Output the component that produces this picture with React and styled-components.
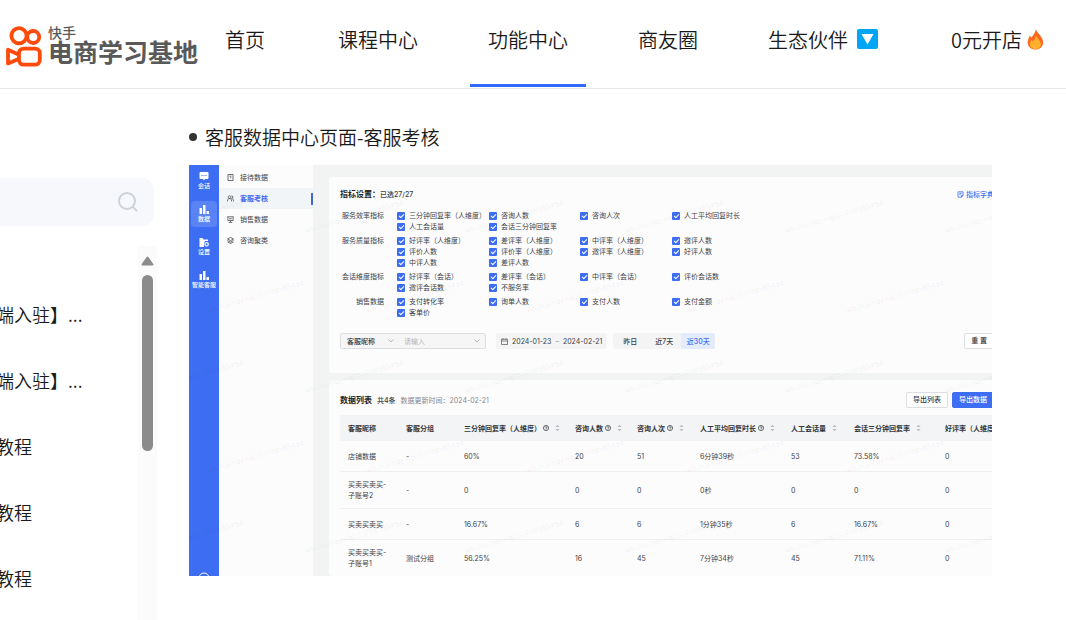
import React, { useState } from "react";
import styled, { createGlobalStyle, css } from "styled-components";

const navItems = [
  { label: "首页" },
  { label: "课程中心" },
  { label: "功能中心", active: true },
  { label: "商友圈" },
  { label: "生态伙伴", icon: "down" },
  { label: "0元开店", icon: "fire" },
];

const lessons = ["端入驻】...", "端入驻】...", "教程", "教程", "教程"];

const railItems = [
  { label: "会话", icon: "chat" },
  { label: "数据", icon: "bars", active: true },
  { label: "设置", icon: "folder" },
  { label: "智能客服", icon: "bars" },
];

const menuItems = [
  { label: "接待数据", icon: "doc" },
  { label: "客服考核", icon: "people", active: true },
  { label: "销售数据", icon: "board" },
  { label: "咨询聚类", icon: "layers" },
];

// items fill the four columns row by row
const metricGroups = [
  {
    title: "服务效率指标",
    items: ["三分钟回复率（人维度）", "咨询人数", "咨询人次", "人工平均回复时长", "人工会话量", "会话三分钟回复率"],
  },
  {
    title: "服务质量指标",
    items: [
      "好评率（人维度）", "差评率（人维度）", "中评率（人维度）", "邀评人数",
      "评价人数", "评价率（人维度）", "邀评率（人维度）", "好评人数",
      "中评人数", "差评人数",
    ],
  },
  {
    title: "会话维度指标",
    items: ["好评率（会话）", "差评率（会话）", "中评率（会话）", "评价会话数", "邀评会话数", "不服务率"],
  },
  {
    title: "销售数据",
    items: ["支付转化率", "询单人数", "支付人数", "支付金额", "客单价"],
  },
];

const ranges = ["昨日", "近7天", "近30天"];

const columns = [
  { label: "客服昵称", width: 58 },
  { label: "客服分组", width: 58 },
  { label: "三分钟回复率（人维度）", width: 111, help: true, sort: true },
  { label: "咨询人数", width: 62, help: true, sort: true },
  { label: "咨询人次", width: 63, help: true, sort: true },
  { label: "人工平均回复时长", width: 91, help: true, sort: true },
  { label: "人工会话量", width: 63, sort: true },
  { label: "会话三分钟回复率", width: 91, sort: true },
  { label: "好评率（人维度）", width: 93, help: true },
];

const rows = [
  ["店铺数据", "-", "60%", "20", "51", "6分钟39秒", "53", "73.58%", "0"],
  ["买卖买卖买-\n子账号2", "-", "0", "0", "0", "0秒", "0", "0", "0"],
  ["买卖买卖买", "-", "16.67%", "6", "6", "1分钟35秒", "6", "16.67%", "0"],
  ["买卖买卖买-\n子账号1", "测试分组", "56.25%", "16", "45", "7分钟34秒", "45", "71.11%", "0"],
];

export function App() {
  return (
    <Page>
      <GlobalStyle />
      <Header>
        <Logo href="#">
          <LogoMark />
          <LogoText>
            <LogoSmall>快手</LogoSmall>
            <LogoBig>电商学习基地</LogoBig>
          </LogoText>
        </Logo>
        <Nav>
          {navItems.map((item) => (
            <NavLink key={item.label} href="#" $active={item.active}>
              {item.label}
              {item.icon === "down" && <DownBadge />}
              {item.icon === "fire" && <Fire />}
            </NavLink>
          ))}
        </Nav>
      </Header>
      <Body>
        <Sidebar />
        <Content>
          <Heading>
            <Dot />
            客服数据中心页面-客服考核
          </Heading>
          <Dashboard />
        </Content>
      </Body>
    </Page>
  );
}

function Sidebar() {
  return (
    <Aside>
      <SearchBox>
        <SearchInput type="search" aria-label="搜索" />
        <SearchButton type="button" aria-label="搜索">
          <svg width="22" height="22" viewBox="0 0 22 22" fill="none" stroke="#cdd2da" strokeWidth="2">
            <circle cx="10" cy="10" r="8" />
            <path d="M16 16l3.5 3.5" strokeLinecap="round" />
          </svg>
        </SearchButton>
      </SearchBox>
      <ListArea>
        <LessonList>
          {lessons.map((text, i) => (
            <Lesson key={i}>
              <LessonLink href="#">{text}</LessonLink>
            </Lesson>
          ))}
        </LessonList>
        <ScrollTrack>
          <svg width="13" height="10" viewBox="0 0 13 10">
            <path d="M6.5 1.5L11.5 8.5H1.5Z" fill="#8b8b8b" stroke="#8b8b8b" strokeWidth="2" strokeLinejoin="round" />
          </svg>
          <ScrollThumb />
        </ScrollTrack>
      </ListArea>
    </Aside>
  );
}

function Dashboard() {
  const [range, setRange] = useState("近30天");

  return (
    <Dash>
      <Rail>
        {railItems.map((item) => (
          <RailButton key={item.label} type="button" $active={item.active}>
            <RailIcon name={item.icon} />
            {item.label}
          </RailButton>
        ))}
        <RailFoot>
          <svg width="12" height="12" viewBox="0 0 12 12" fill="none" stroke="#fff">
            <circle cx="6" cy="6" r="5" />
          </svg>
        </RailFoot>
      </Rail>
      <Menu>
        {menuItems.map((item) => (
          <MenuLink key={item.label} href="#" $active={item.active}>
            <MenuIcon name={item.icon} />
            {item.label}
          </MenuLink>
        ))}
      </Menu>
      <Main>
        <Card>
          <CardHead>
            <Title>指标设置：</Title>
            <Count>已选27/27</Count>
            <DictLink href="#">
              <svg width="7" height="7" viewBox="0 0 7 7" fill="none" stroke="currentColor" strokeWidth="0.8">
                <path d="M1 .8h5v3.700L4.500 6.200H1zM2.300 2.300h2.500M2.300 3.700h1.500M4.500 6V4.500H6" />
              </svg>
              指标字典
            </DictLink>
          </CardHead>
          <Groups>
            {metricGroups.map((group) => (
              <Group key={group.title}>
                <Legend>{group.title}</Legend>
                <Checks>
                  {group.items.map((name) => (
                    <CheckLabel key={name}>
                      <Check type="checkbox" defaultChecked />
                      {name}
                    </CheckLabel>
                  ))}
                </Checks>
              </Group>
            ))}
          </Groups>
          <Filters>
            <Combo>
              <Select aria-label="筛选字段">
                <option>客服昵称</option>
              </Select>
              <Chevron />
              <Keyword aria-label="关键词" placeholder="请输入" />
              <Chevron />
            </Combo>
            <DateRange type="button">
              <svg width="7" height="7" viewBox="0 0 7 7" fill="none" stroke="#555" strokeWidth="0.7">
                <path d="M.5 1.200h6v5.300h-6zM.5 3h6M2 .2v1.600M5 .2v1.600" />
              </svg>
              <span>2024-01-23</span>
              <Tilde>–</Tilde>
              <span>2024-02-21</span>
            </DateRange>
            <RangeGroup>
              {ranges.map((name) => (
                <RangeButton key={name} type="button" $active={name === range} onClick={() => setRange(name)}>
                  {name}
                </RangeButton>
              ))}
            </RangeGroup>
            <Reset type="button">重 置</Reset>
          </Filters>
        </Card>
        <Card $last>
          <TableHead>
            <Title>数据列表</Title>
            <Count>共4条</Count>
            <Updated>数据更新时间：2024-02-21</Updated>
            <Actions>
              <Button type="button">导出列表</Button>
              <Button type="button" $primary>导出数据</Button>
            </Actions>
          </TableHead>
          <Table>
            <colgroup>
              {columns.map((col) => (
                <col key={col.label} style={{ width: col.width }} />
              ))}
            </colgroup>
            <thead>
              <tr>
                {columns.map((col) => (
                  <Th key={col.label}>
                    <ThInner>
                      {col.label}
                      {col.help && <Help />}
                      {col.sort && <Sort />}
                    </ThInner>
                  </Th>
                ))}
              </tr>
            </thead>
            <tbody>
              {rows.map((row, i) => (
                <tr key={i}>
                  {row.map((cell, j) => (
                    <Td key={j}>{cell}</Td>
                  ))}
                </tr>
              ))}
            </tbody>
          </Table>
        </Card>
      </Main>
      <Watermark aria-hidden="true">
        {[0, 1, 2, 3, 4].map((line) => (
          <MarkLine key={line} $odd={line % 2 === 1}>
            {[0, 1, 2, 3, 4, 5].map((n) => (
              <Mark key={n}>wb_liuyingying03 1708585454</Mark>
            ))}
          </MarkLine>
        ))}
      </Watermark>
    </Dash>
  );
}

/* icons */

function LogoMark() {
  return (
    <svg width="38" height="42" viewBox="0 0 38 42" fill="none" stroke="#ff4a0a" strokeWidth="3.8">
      <circle cx="14" cy="9.800" r="7.600" />
      <circle cx="28.200" cy="11" r="6" />
      <rect x="14" y="22.600" width="20.800" height="16" rx="4.500" />
      <path d="M13.500 28.500L3 23.800V37.400L13.500 33" strokeLinejoin="round" />
    </svg>
  );
}

function DownBadge() {
  return (
    <BadgeSvg width="21" height="20" viewBox="0 0 21 20">
      <rect width="21" height="20" rx="2" fill="#00a6f4" />
      <path d="M4.500 5h12L10.500 15.500z" fill="#fff" />
    </BadgeSvg>
  );
}

function Fire() {
  return (
    <FireSvg width="17" height="21" viewBox="0 0 17 21">
      <path d="M8.800 0C9.500 3 14 6 15.600 10.500C17.500 16.500 13.500 20.500 8.500 20.500C3 20.500-.5 16.500 1 11C1.500 9 2.500 7.500 2.800 6.500C3.500 7.300 4 8 4.200 8.800C6 6.500 8.500 3.500 8.800 0Z" fill="#ff6a22" />
      <path d="M9 6.500C9.500 9 13.500 11 13.800 14.800C14 18 11.500 20.200 8.500 20.200C5 20.200 2.800 18 3 15C3.100 13 4 12 4.300 11C5 11.500 5.400 12 5.700 12.500C7.500 11 8.800 9 9 6.500Z" fill="#ffb02e" />
    </FireSvg>
  );
}

function RailIcon({ name }) {
  return (
    <svg width="10" height="9" viewBox="0 0 10 9" fill="#fff">
      {name === "chat" && (
        <>
          <path d="M1.500 0h7a1 1 0 0 1 1 1v5a1 1 0 0 1-1 1H6L5 8.500 4 7H1.500a1 1 0 0 1-1-1V1a1 1 0 0 1 1-1z" />
          <path d="M2.500 3h1v1h-1zM4.500 3h1v1h-1zM6.500 3h1v1h-1z" fill="#3d6df2" />
        </>
      )}
      {name === "bars" && <path d="M.5 3H3v6H.5zM4 0h2.500v9H4zM7.500 6H10v3H7.500z" />}
      {name === "folder" && (
        <>
          <path d="M.5 0h3l1 1.500H9V3H6L5 5v4H.5z" />
          <circle cx="7.600" cy="6.300" r="1.700" fill="none" stroke="#fff" strokeWidth="1.200" />
        </>
      )}
    </svg>
  );
}

function MenuIcon({ name }) {
  return (
    <svg width="7" height="7" viewBox="0 0 7 7" fill="none" stroke="#4a4d52" strokeWidth="0.8">
      {name === "doc" && <path d="M1 .5h5v6H1zM2.500 2.200h2M3 3.800h1.200" />}
      {name === "people" && (
        <path d="M2.500.8a1.300 1.300 0 1 0 .01 0M.4 6.500C.4 4.200 1.400 3.500 2.500 3.500S4.600 4.200 4.600 6.500M4.600.8a1.300 1.300 0 0 1 0 2.600C6 3.600 6.600 5 6.600 6.500" />
      )}
      {name === "board" && <path d="M.3.8h6.400M.9.8v3.700h5.200V.8M2.200 2.700h2.600M3.500 4.500v1.600M1.800 6.400h3.400" />}
      {name === "layers" && <path d="M3.500.4L6.500 2 3.500 3.600.5 2zM.5 3.500l3 1.600 3-1.600M.5 4.900l3 1.600 3-1.600" />}
    </svg>
  );
}

function Chevron() {
  return (
    <svg width="6" height="4" viewBox="0 0 6 4" fill="none" stroke="#a5a8ad" strokeWidth="0.8">
      <path d="M.5.5L3 3 5.500.5" />
    </svg>
  );
}

function Help() {
  return (
    <svg width="6" height="6" viewBox="0 0 6 6" fill="none" stroke="#33363b" strokeWidth="0.7">
      <circle cx="3" cy="3" r="2.600" />
      <path d="M2.100 2.400a.9.8 0 1 1 .9.9v.4M3 4.200v.6" />
    </svg>
  );
}

function Sort() {
  return (
    <SortSvg width="5" height="8" viewBox="0 0 5 8" fill="#b9bcc1">
      <path d="M2.500.8L4.500 3h-4zM2.500 7.200L4.500 5h-4z" />
    </SortSvg>
  );
}

/* page */

const GlobalStyle = createGlobalStyle`
  * {
    box-sizing: border-box;
  }

  body {
    margin: 0;
    background: #fff;
    color: #1a1a1a;
    font-family: "Noto Sans CJK SC", sans-serif;
  }

  a {
    color: inherit;
    text-decoration: none;
  }

  button,
  input,
  select {
    margin: 0;
    padding: 0;
    border: 0;
    background: none;
    color: inherit;
    font: inherit;
    outline: none;
  }

  svg {
    flex: none;
  }
`;

const Page = styled.div`
  display: flex;
  flex-direction: column;
  height: 100vh;
  overflow: hidden;
`;

const Header = styled.header`
  display: flex;
  flex: none;
  height: 89px;
  border-bottom: 1px solid #e8e8e8;
`;

const Logo = styled.a`
  display: flex;
  flex: none;
  align-items: center;
  gap: 5px;
  width: 207px;
  padding: 5px 0 0 5px;
`;

const LogoText = styled.span`
  display: flex;
  flex-direction: column;
  margin-bottom: 5px;
  color: #595959;
  white-space: nowrap;
`;

const LogoSmall = styled.span`
  font-size: 14px;
  line-height: 14px;
  font-weight: 500;
`;

const LogoBig = styled.span`
  font-size: 25px;
  line-height: 24px;
  font-weight: 700;
`;

const Nav = styled.nav`
  display: flex;
  gap: 34px;
`;

const NavLink = styled.a`
  display: flex;
  align-items: center;
  min-width: 79px;
  height: 87px;
  padding: 0 18px 6px;
  border-bottom: 3px solid ${(props) => (props.$active ? "#326bfb" : "transparent")};
  font-size: 20px;
  font-weight: 350;
  white-space: nowrap;
`;

const BadgeSvg = styled.svg`
  margin: 0 3px 0 9px;
`;

const FireSvg = styled.svg`
  margin-left: 5px;
`;

const Body = styled.div`
  display: flex;
  flex: 1;
  min-height: 0;
`;

/* sidebar */

const Aside = styled.aside`
  display: flex;
  flex: none;
  flex-direction: column;
  width: 157px;
  padding-top: 89px;
`;

const SearchBox = styled.form`
  display: flex;
  align-items: center;
  height: 48px;
  margin-right: 3px;
  padding-right: 15px;
  border-radius: 0 12px 12px 0;
  background: #f6f8fc;
`;

const SearchInput = styled.input`
  flex: 1;
  min-width: 0;
`;

const SearchButton = styled.button`
  display: flex;
`;

const ListArea = styled.div`
  display: flex;
  flex: 1;
  min-height: 0;
  margin-top: 20px;
`;

const LessonList = styled.ul`
  flex: 1;
  min-width: 0;
  margin: 0 0 0 -4px;
  padding: 35px 0 0;
  list-style: none;
`;

const Lesson = styled.li`
  height: 66px;
  font-size: 18px;
  line-height: 66px;
  font-weight: 350;
`;

const LessonLink = styled.a`
  white-space: nowrap;
`;

const ScrollTrack = styled.div`
  display: flex;
  flex-direction: column;
  align-items: center;
  gap: 9px;
  width: 19px;
  padding-top: 10px;
  background: #fbfbfb;
`;

const ScrollThumb = styled.div`
  width: 11px;
  height: 176px;
  border-radius: 6px;
  background: #8b8b8b;
`;

/* content */

const Content = styled.main`
  flex: 1;
  min-width: 0;
  padding: 34px 74px 0 32px;
`;

const Heading = styled.h2`
  display: flex;
  align-items: center;
  gap: 8px;
  margin: 0 0 14px;
  font-size: 19px;
  line-height: 28px;
  font-weight: 350;
`;

const Dot = styled.span`
  width: 8px;
  height: 8px;
  border-radius: 50%;
  background: #333;
`;

const Dash = styled.section`
  position: relative;
  display: flex;
  overflow: hidden;
  background: #f2f3f3;
  color: #3c3f44;
  font-family: Inter, "Noto Sans CJK SC", sans-serif;
  font-size: 7px;
  line-height: 11px;
`;

const Rail = styled.nav`
  display: flex;
  flex: none;
  flex-direction: column;
  align-items: center;
  gap: 7px;
  width: 30px;
  padding-top: 3px;
  background: #3d6df2;
`;

const RailButton = styled.button`
  display: flex;
  flex-direction: column;
  align-items: center;
  gap: 1px;
  width: 26px;
  height: 26px;
  padding-top: 4px;
  border-radius: 4px;
  background: ${(props) => (props.$active ? "#5a84f6" : "transparent")};
  color: #fff;
  font-size: 6px;
  line-height: 8px;
  font-weight: 500;
  white-space: nowrap;
`;

const RailFoot = styled.div`
  height: 4px;
  margin-top: auto;
  overflow: hidden;
`;

const Menu = styled.nav`
  flex: none;
  width: 94px;
  padding-top: 2px;
  background: #fcfcfd;
`;

const MenuLink = styled.a`
  display: flex;
  align-items: center;
  gap: 6px;
  height: 21px;
  padding-left: 8px;

  ${(props) =>
    props.$active &&
    css`
      background: linear-gradient(#3d66d9, #3d66d9) right center / 2px 12px no-repeat, #f2f5f7;
      color: #3d6df2;
      font-weight: 700;
    `}
`;

const Main = styled.div`
  flex: 1;
  min-width: 0;
  padding: 12px 0 0 16px;
`;

const Card = styled.section`
  margin: 0 -13px ${(props) => (props.$last ? 0 : 7)}px 0;
  padding: 12px 11px ${(props) => (props.$last ? 0 : 24)}px;
  border-radius: 4px;
  background: #fcfcfd;
`;

const CardHead = styled.header`
  display: flex;
  align-items: center;
  margin-bottom: 10px;
`;

const TableHead = styled(CardHead)`
  gap: 5px;
  height: 16px;
  margin-bottom: 7px;
`;

const Title = styled.h3`
  margin: 0;
  color: #222;
  font-size: 8px;
  line-height: 11px;
  font-weight: 700;
`;

const Count = styled.span`
  font-weight: 500;
`;

const Updated = styled.span`
  color: #85888d;
`;

const DictLink = styled.a`
  display: flex;
  align-items: center;
  gap: 2px;
  margin-left: auto;
  color: #3d6df2;
  font-weight: 500;
`;

const Groups = styled.div`
  display: flex;
  flex-direction: column;
  gap: 3px;
  margin-bottom: 15px;
`;

const Group = styled.div`
  display: grid;
  grid-template-columns: 44px 1fr;
  column-gap: 13px;
`;

const Legend = styled.span`
  text-align: right;
`;

const Checks = styled.div`
  display: grid;
  grid-template-columns: 92px 91px 92px 1fr;
`;

const CheckLabel = styled.label`
  display: flex;
  align-items: center;
  gap: 4px;
  white-space: nowrap;
`;

const Check = styled.input`
  display: grid;
  flex: none;
  place-items: center;
  width: 8px;
  height: 8px;
  border-radius: 1px;
  appearance: none;

  &:not(:checked) {
    border: 1px solid #c5c8cd;
  }

  &:checked {
    background: #3d6df2;
  }

  &:checked::after {
    content: "";
    width: 4px;
    height: 2px;
    margin-bottom: 1px;
    border: solid #fff;
    border-width: 0 0 1px 1px;
    transform: rotate(-45deg);
  }
`;

const Filters = styled.div`
  display: flex;
  align-items: center;
`;

const Combo = styled.div`
  display: flex;
  align-items: center;
  width: 146px;
  height: 16px;
  margin-right: 10px;
  padding: 0 5px 0 6px;
  border: 1px solid #dcdee1;
  border-radius: 2px;
  background: #f6f6f7;
`;

const Select = styled.select`
  width: 41px;
  appearance: none;
  color: #33363b;
  font-weight: 500;
`;

const Keyword = styled.input`
  flex: 1;
  min-width: 0;
  padding-left: 10px;

  &::placeholder {
    color: #b5b7bb;
  }
`;

const DateRange = styled.button`
  display: flex;
  align-items: center;
  gap: 4px;
  height: 16px;
  margin-right: 6px;
  padding: 0 5px;
  border-radius: 2px;
  background: #f4f4f5;
`;

const Tilde = styled.span`
  color: #999;
`;

const RangeGroup = styled.div`
  display: flex;
  border-radius: 2px;
  background: #f4f4f5;
`;

const RangeButton = styled.button`
  width: 34px;
  height: 16px;
  border-radius: 2px;
  background: ${(props) => (props.$active ? "#e4ebfd" : "transparent")};
  color: ${(props) => (props.$active ? "#3d6df2" : "inherit")};
  font-weight: 500;
`;

const Button = styled.button`
  height: 16px;
  padding: 0 6px;
  border: 1px solid ${(props) => (props.$primary ? "#3d6df2" : "#dcdee1")};
  border-radius: 2px;
  background: ${(props) => (props.$primary ? "#3d6df2" : "#fff")};
  color: ${(props) => (props.$primary ? "#fff" : "#33363b")};
  line-height: 14px;
  font-weight: 500;
`;

const Reset = styled(Button)`
  margin-left: auto;
`;

const Actions = styled.div`
  display: flex;
  gap: 4px;
  margin-left: auto;
`;

const Table = styled.table`
  width: 100%;
  table-layout: fixed;
  border-spacing: 0;
`;

const Th = styled.th`
  height: 26px;
  padding: 0 0 0 8px;
  background: #f2f4f5;
  color: #33363b;
  font-weight: 700;
  text-align: left;
`;

const ThInner = styled.span`
  display: flex;
  align-items: center;
  gap: 2px;
  white-space: nowrap;
`;

const SortSvg = styled.svg`
  margin-left: 4px;
`;

const Td = styled.td`
  height: 31px;
  padding: 7px 0 7px 8px;
  border-bottom: 1px solid #f0f0f2;
  white-space: pre-line;

  tr:last-child > & {
    border-bottom: 0;
  }
`;

const Watermark = styled.div`
  position: absolute;
  inset: 0;
  padding-top: 11px;
  overflow: hidden;
  color: rgba(0, 0, 0, 0.07);
  pointer-events: none;
`;

const MarkLine = styled.div`
  display: flex;
  align-items: center;
  height: 80px;
  margin-left: ${(props) => (props.$odd ? -14 : -75)}px;
`;

const Mark = styled.span`
  flex: none;
  width: 160px;
  text-align: center;
  transform: rotate(-16deg);
`;

export default App;
